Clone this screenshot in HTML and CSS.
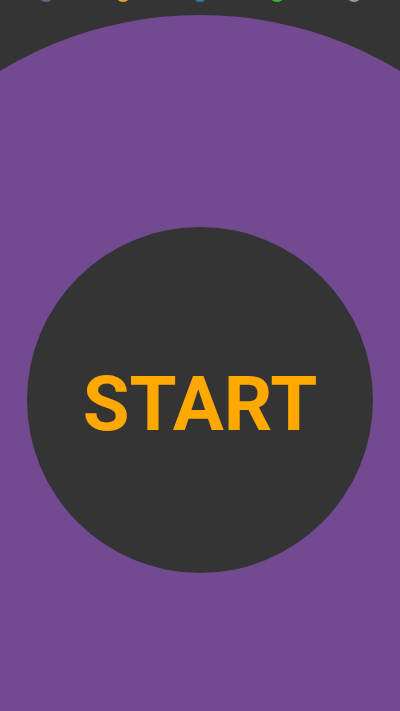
FILE: index.html
```html
<!DOCTYPE html>
<html>
<head>
<meta charset="utf-8">
<link rel="stylesheet" href="styles.css">
</head>
<body>
<div class="screen">
  <div class="dots">
    <span class="dot dot-purple"></span>
    <span class="dot dot-yellow"></span>
    <span class="dot dot-blue"></span>
    <span class="dot dot-green"></span>
    <span class="dot dot-grey"></span>
  </div>
  <div class="stage">
    <div class="ring">
      <div class="start-btn"><span class="start-label">START</span></div>
    </div>
  </div>
</div>
</body>
</html>
```
FILE: styles.css
```css
html, body {
  margin: 0;
  padding: 0;
  background: #343434;
}
.screen {
  width: 400px;
  height: 711px;
  overflow: hidden;
  background: #343434;
  display: flex;
  flex-direction: column;
  align-items: center;
}
.dots {
  display: flex;
  justify-content: center;
  gap: 61px;
  margin-top: -14px;
  height: 16px;
  flex-shrink: 0;
}
.dot {
  width: 16px;
  height: 16px;
  border-radius: 50%;
}
.dot-purple { background: #6f5d8c; }
.dot-yellow { background: #e0a52a; }
.dot-blue { background: #2a7ea0; }
.dot-green { background: #2fbf2f; }
.dot-grey { background: #9a9a9a; }
.stage {
  margin-top: 13px;
  display: flex;
  justify-content: center;
  width: 400px;
  flex-shrink: 0;
}
.ring {
  width: 770px;
  height: 770px;
  flex-shrink: 0;
  border-radius: 50%;
  background: #734a91;
  display: flex;
  align-items: center;
  justify-content: center;
}
.start-btn {
  width: 346px;
  height: 346px;
  border-radius: 50%;
  background: #343434;
  display: flex;
  align-items: center;
  justify-content: center;
}
.start-label {
  color: #ffa800;
  font-family: Roboto, "Liberation Sans", sans-serif;
  font-weight: bold;
  font-size: 76px;
  line-height: 1;
  margin-top: 7px;
}
```
